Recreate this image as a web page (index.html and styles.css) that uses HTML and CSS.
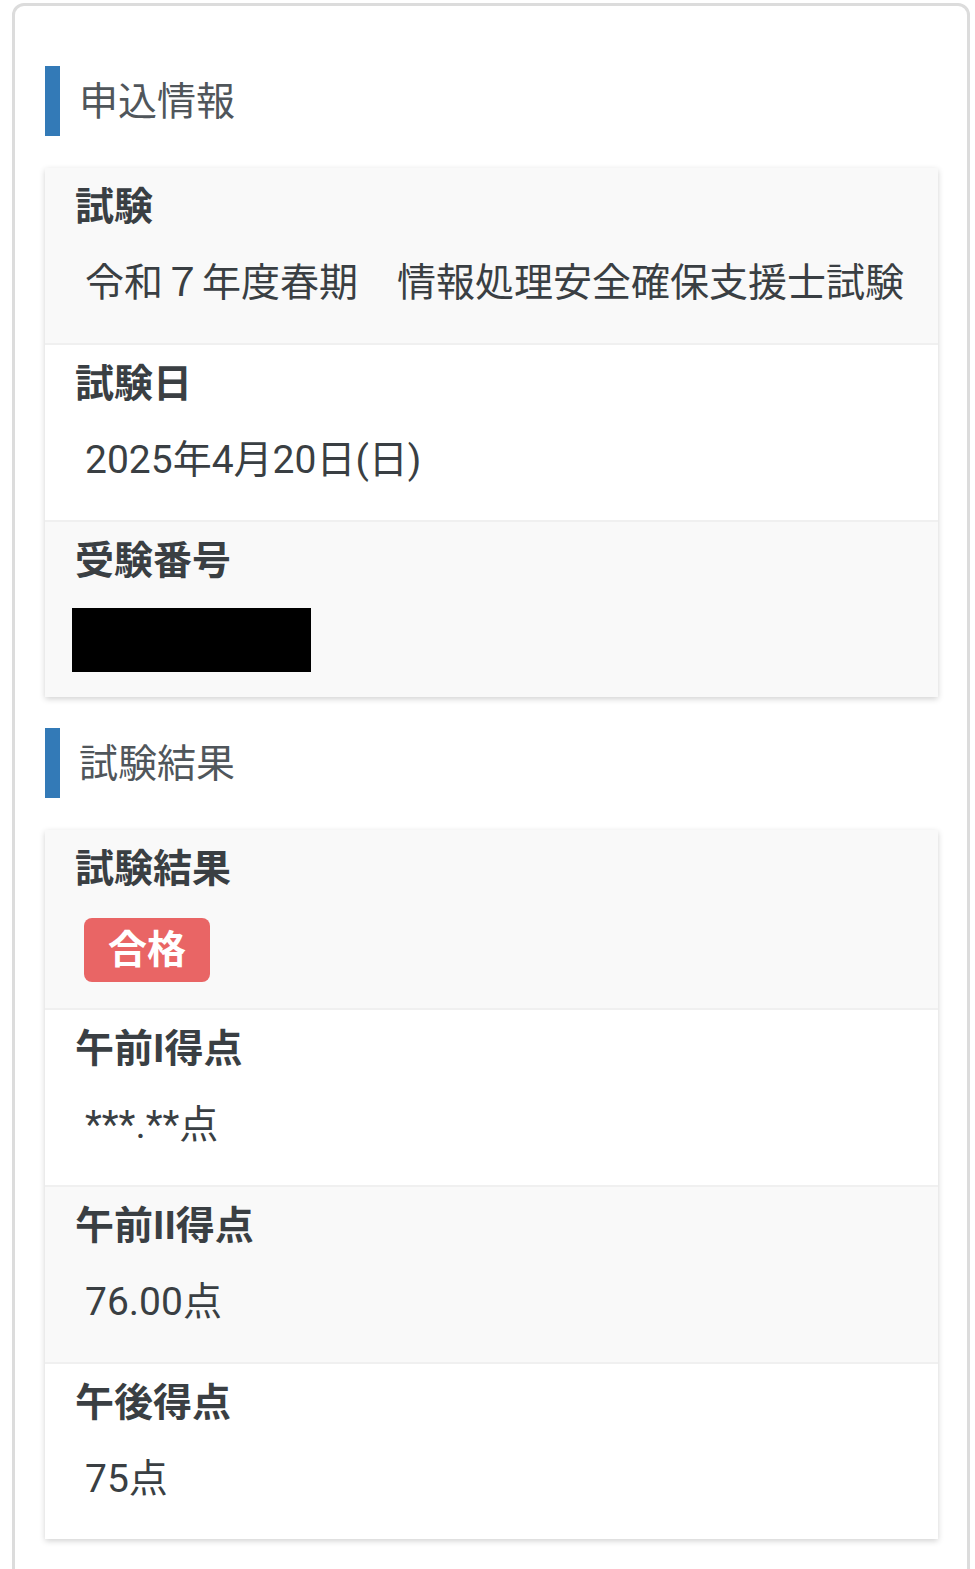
FILE: index.html
```html
<!DOCTYPE html>
<html lang="ja">
  <head>
    <meta charset="UTF-8" />
    <meta name="viewport" content="width=device-width, initial-scale=1.0" />
    <title>試験結果</title>
    <link rel="stylesheet" href="styles.css">
  </head>
  <body>
    <div class="panel">

      <!-- 申込情報 -->
      <h2 class="section-title">申込情報</h2>
      <div class="card">
        <div class="row">
          <div class="label">試験</div>
          <div class="value">令和７年度春期　情報処理安全確保支援士試験</div>
        </div>
        <div class="row">
          <div class="label">試験日</div>
          <div class="value">2025年4月20日(日)</div>
        </div>
        <div class="row">
          <div class="label">受験番号</div>
          <div class="value"><span class="redacted"></span></div>
        </div>
      </div>

      <!-- 試験結果 -->
      <h2 class="section-title">試験結果</h2>
      <div class="card">
        <div class="row">
          <div class="label">試験結果</div>
          <div class="value"><span class="badge">合格</span></div>
        </div>
        <div class="row">
          <div class="label">午前I得点</div>
          <div class="value">***.**点</div>
        </div>
        <div class="row">
          <div class="label">午前II得点</div>
          <div class="value">76.00点</div>
        </div>
        <div class="row">
          <div class="label">午後得点</div>
          <div class="value">75点</div>
        </div>
      </div>

    </div>
  </body>
</html>
```

FILE: styles.css
```css
:root {
  --accent: #337ab7;
  --text: #3a3f43;
  --muted: #50565b;
  --row-alt: #f9f9f9;
  --line: #f0f0f0;
  --pass: #e96565;
}

* {
  box-sizing: border-box;
}

body {
  margin: 0;
  background: #fff;
  font-family: Roboto, "Noto Sans CJK JP", sans-serif;
  font-size: 39px;
  color: var(--text);
}

.panel {
  margin: 3px 5px 0 12px;
  border: 3px solid #dcdcdc;
  border-radius: 12px;
  padding: 60px 29px 40px 30px;
  min-height: 1600px;
}

.section-title {
  margin: 0 0 32px;
  display: flex;
  align-items: center;
  height: 70px;
  padding: 0 0 6px 19px;
  border-left: 15px solid var(--accent);
  font-size: 39px;
  font-weight: 400;
  color: var(--muted);
}

.card {
  background: #fff;
  box-shadow: 0 2px 6px rgba(0, 0, 0, 0.18);
  margin-bottom: 31px;
}

.row {
  padding: 10px 30px 31px;
  border-bottom: 2px solid var(--line);
}

.row:nth-child(odd) {
  background: var(--row-alt);
}

.row:last-child {
  border-bottom: none;
}

.label {
  font-weight: 700;
  line-height: 58px;
}

.value {
  margin-top: 18px;
  padding-left: 10px;
  line-height: 58px;
  display: flex;
  align-items: flex-start;
  min-height: 58px;
}

.redacted {
  display: block;
  width: 239px;
  height: 64px;
  margin: 0 0 -6px -13px;
  background: #000;
}

.badge {
  display: inline-block;
  padding: 0 24px;
  height: 64px;
  line-height: 64px;
  margin: 2px 0 -5px -1px;
  background: var(--pass);
  color: #fff;
  font-weight: 700;
  border-radius: 8px;
}
```
